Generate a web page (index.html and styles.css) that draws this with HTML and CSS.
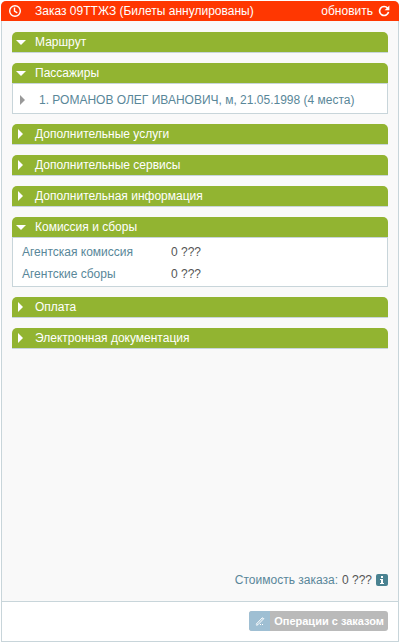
FILE: index.html
```html
<!DOCTYPE html>
<html lang="ru">
<head>
<meta charset="utf-8">
<title>Заказ 09ТТЖЗ</title>
<link rel="stylesheet" href="styles.css">
</head>
<body>
<main class="order">
  <header class="order-head">
    <svg class="clock" viewBox="0 0 14 14" aria-hidden="true"><circle cx="7" cy="7" r="5.3"/><path d="M6.5 3.5V7.2L9.3 8.8"/></svg>
    <h1 class="order-title">Заказ 09ТТЖЗ (Билеты аннулированы)</h1>
    <button class="refresh" type="button">обновить
      <svg class="refresh-icon" viewBox="0 0 12 12" aria-hidden="true"><path class="arc" d="M9.6 3.2A4.5 4.5 0 1 0 10.5 6.8"/><path class="tip" d="M11.4 0.5V5.3H6.6Z"/></svg>
    </button>
  </header>
  <div class="order-body">
    <section class="section">
      <button class="bar" type="button" aria-expanded="true"><span class="arrow down"></span>Маршрут</button>
    </section>
    <section class="section">
      <button class="bar" type="button" aria-expanded="true"><span class="arrow down"></span>Пассажиры</button>
      <div class="content">
        <button class="passenger" type="button"><span class="arrow right muted"></span>1. РОМАНОВ ОЛЕГ ИВАНОВИЧ, м, 21.05.1998 (4 места)</button>
      </div>
    </section>
    <section class="section">
      <button class="bar" type="button" aria-expanded="false"><span class="arrow right"></span>Дополнительные услуги</button>
    </section>
    <section class="section">
      <button class="bar" type="button" aria-expanded="false"><span class="arrow right"></span>Дополнительные сервисы</button>
    </section>
    <section class="section">
      <button class="bar" type="button" aria-expanded="false"><span class="arrow right"></span>Дополнительная информация</button>
    </section>
    <section class="section">
      <button class="bar" type="button" aria-expanded="true"><span class="arrow down"></span>Комиссия и сборы</button>
      <dl class="content fees">
        <dt>Агентская комиссия</dt><dd>0 ???</dd>
        <dt>Агентские сборы</dt><dd>0 ???</dd>
      </dl>
    </section>
    <section class="section">
      <button class="bar" type="button" aria-expanded="false"><span class="arrow right"></span>Оплата</button>
    </section>
    <section class="section">
      <button class="bar" type="button" aria-expanded="false"><span class="arrow right"></span>Электронная документация</button>
    </section>
    <p class="total"><span>Стоимость заказа:</span><span class="amount">0 ???</span>
      <svg class="info" viewBox="0 0 12 12" role="img" aria-label="Информация"><rect width="12" height="12" rx="2"/><path d="M5 2h2v2H5zM4 5h3v4h1v1H4V9h1V6H4z"/></svg>
    </p>
  </div>
  <footer class="order-foot">
    <button class="actions" type="button" disabled>
      <span class="actions-icon"><svg viewBox="0 0 10 10" aria-hidden="true"><path class="pen" d="M1.2 8.2L7.3 1.8M2.8 8.8L8.8 2.6M7 1.8L8.8 2.8M1 9L3 8.8"/><path class="dots" d="M5 8h1v1H5zM7 8h1v1H7z"/></svg></span>
      <span class="actions-text">Операции с заказом</span>
    </button>
  </footer>
</main>
</body>
</html>
```
FILE: styles.css
```css
* { box-sizing: border-box; }
body {
  margin: 0;
  padding: 1px;
  background: #fff;
  color: #555;
  font: 12px/20px "Liberation Sans", Arial, sans-serif;
}
button {
  margin: 0;
  border: 0;
  padding: 0;
  background: none;
  color: inherit;
  font: inherit;
  text-align: left;
}
svg { display: block; flex: none; }
.order {
  display: flex;
  flex-direction: column;
  min-height: calc(100vh - 2px);
  border: 1px solid #c8d5da;
  border-top: 0;
  border-radius: 5px 5px 0 0;
}
.order-head {
  display: flex;
  align-items: center;
  height: 20px;
  margin: 0 -1px;
  padding: 0 9px 0 7px;
  border-radius: 5px 5px 0 0;
  background: #ff3701;
  color: #fff;
}
.clock { width: 14px; height: 14px; margin-right: 13px; }
.clock circle, .clock path { fill: none; stroke: #fff; stroke-width: 1.4; }
.order-title { flex: 1; margin: 0; font-size: 12px; font-weight: normal; }
.refresh { display: flex; align-items: center; gap: 5px; }
.refresh-icon { width: 12px; height: 12px; }
.arc { fill: none; stroke: #fff; stroke-width: 1.7; }
.tip { fill: #fff; }
.order-body {
  display: flex;
  flex: 1;
  flex-direction: column;
  gap: 10px;
  padding: 11px 10px;
  background: #f9f9f9;
}
.bar {
  display: flex;
  align-items: center;
  width: 100%;
  height: 21px;
  border-bottom: 1px solid #c8d5da;
  border-radius: 5px 5px 0 0;
  background: #92b431;
  color: #fff;
}
.arrow { width: 10px; height: 10px; margin: 0 9px 0 4px; background: currentColor; }
.down { clip-path: polygon(0 30%, 100% 30%, 50% 80%); }
.right { clip-path: polygon(20% 0, 70% 50%, 20% 100%); }
.content {
  margin: 0;
  border: 1px solid #c8d5da;
  border-top: 0;
  background: #fff;
}
.passenger {
  display: flex;
  align-items: center;
  width: 100%;
  height: 29px;
  padding-top: 3px;
  color: #598799;
  white-space: nowrap;
}
.passenger .arrow { margin: 0 11px 0 5px; color: #999; }
.fees {
  display: grid;
  grid-template-columns: 149px 1fr;
  gap: 2px 0;
  padding: 4px 9px 2px;
}
.fees dt { color: #598799; }
.fees dd { margin: 0; }
.total {
  display: flex;
  align-items: center;
  justify-content: flex-end;
  gap: 4px;
  margin: auto 0 0;
  color: #598799;
}
.amount { color: #555; }
.info { width: 12px; height: 12px; fill: #4a8291; }
.info path { fill: #fff; }
.order-foot {
  display: flex;
  justify-content: flex-end;
  padding: 9px 10px 10px;
  border-top: 1px solid #c8d5da;
  background: #fff;
}
.actions {
  display: flex;
  height: 20px;
  overflow: hidden;
  border-radius: 3px;
  background: #bababa;
  color: #fff;
  font-size: 11px;
  font-weight: bold;
}
.actions-icon { display: grid; place-items: center; width: 21px; background: #9fbfd3; }
.actions-icon svg { width: 10px; height: 10px; }
.pen { fill: none; stroke: #fff; }
.dots { fill: #fff; }
.actions-text { padding: 0 4px; }
```
